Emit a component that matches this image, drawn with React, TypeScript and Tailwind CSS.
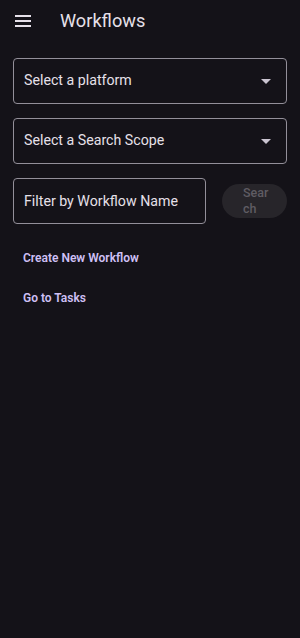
import { useState } from "react";

function Caret() {
  return (
    <svg width="10" height="5" viewBox="0 0 10 5" className="shrink-0">
      <path d="M0 0 L10 0 L5 5 Z" fill="#cac4d0" />
    </svg>
  );
}

function SelectBox({ label }: { label: string }) {
  return (
    <div className="h-[46px] w-full border border-[#938f99] rounded-[4px] flex items-center justify-between pl-[10px] pr-[15px]">
      <span className="text-[14.2px] text-[#e6e0e9]">{label}</span>
      <Caret />
    </div>
  );
}

export default function App() {
  const [query, setQuery] = useState("");

  return (
    <div
      className="w-[300px] h-[638px] bg-[#141218] text-[#e6e0e9] overflow-hidden"
      style={{ fontFamily: "Roboto, 'Noto Sans', sans-serif" }}
    >
      <header className="h-[42px] flex items-center pl-[15px]">
        <div className="w-[16px] flex flex-col gap-[3px]">
          <span className="h-[2px] bg-[#e6e0e9]" />
          <span className="h-[2px] bg-[#e6e0e9]" />
          <span className="h-[2px] bg-[#e6e0e9]" />
        </div>
        <h1 className="ml-[29px] text-[18.2px] leading-none text-[#e6e0e9]">Workflows</h1>
      </header>

      <div className="px-[13px] pt-[16px] flex flex-col gap-[14px]">
        <SelectBox label="Select a platform" />
        <SelectBox label="Select a Search Scope" />

        <div className="flex items-center gap-[16px]">
          <input
            type="text"
            value={query}
            onChange={e => setQuery(e.target.value)}
            placeholder="Filter by Workflow Name"
            className="h-[46px] w-[193px] bg-transparent border border-[#938f99] rounded-[4px] pl-[10px] text-[14.2px] text-[#e6e0e9] placeholder:text-[#e6e0e9] outline-none"
          />
          <button
            disabled
            className="w-[65px] h-[34px] rounded-full bg-[#27252a] text-[#5f5c63] text-[12.5px] font-medium leading-[16px] pl-[21px] text-left"
          >
            Sear
            <br />
            ch
          </button>
        </div>
      </div>

      <nav className="pl-[23px] pt-[28px] flex flex-col gap-[27px]">
        <a className="text-[12px] font-semibold text-[#cfc0f5] leading-[13px]">Create New Workflow</a>
        <a className="text-[12px] font-semibold text-[#cfc0f5] leading-[13px]">Go to Tasks</a>
      </nav>
    </div>
  );
}
